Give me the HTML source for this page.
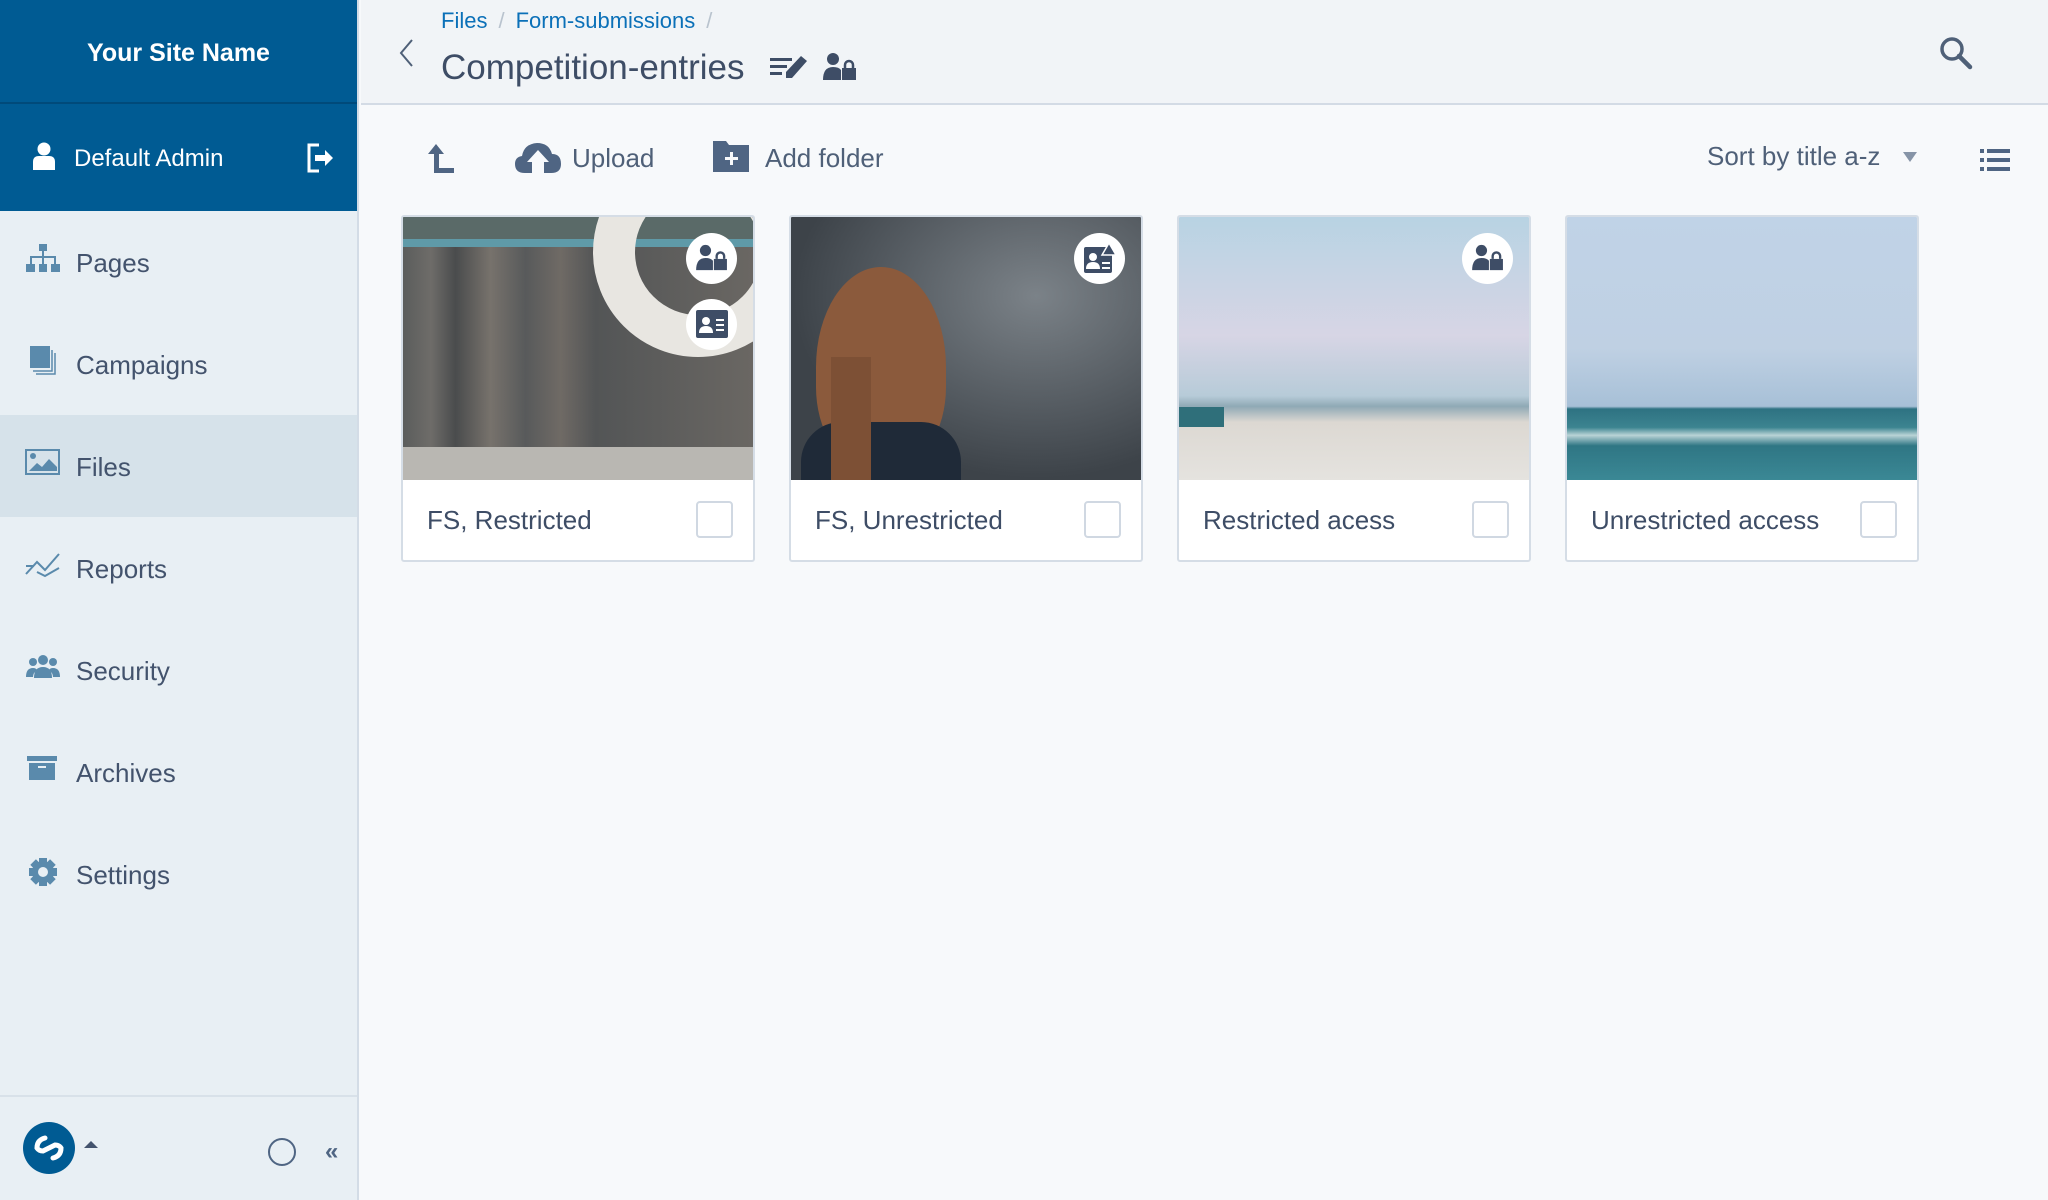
<!DOCTYPE html>
<html><head><meta charset="utf-8"><style>
*{box-sizing:border-box;margin:0;padding:0}
body{width:2048px;height:1200px;overflow:hidden;font-family:"Liberation Sans",sans-serif;background:#f7f9fb;position:relative;color:#43536d}
.side{position:absolute;left:0;top:0;width:359px;height:1200px;background:#e8eff4;border-right:2px solid #d3dce6}
.brand{height:104px;background:#005b93;color:#fff;font-weight:bold;font-size:25px;text-align:center;line-height:106px;border-bottom:2px solid #004a7a}
.admin{height:107px;background:#005b93;color:#fff;font-size:24px;position:relative}
.admin span{position:absolute;left:74px;top:41px}
.nav{position:absolute;left:0;width:357px;height:102px;font-size:26px}
.nav span{position:absolute;left:76px;top:37px}
.nav svg{position:absolute;left:25px;top:33px}
.top{position:absolute;left:361px;top:0;right:0;height:105px;background:#f1f4f7;border-bottom:2px solid #d3dbe5}
.bc{position:absolute;left:80px;top:8px;font-size:22px;color:#0b70b8}
.bc i{color:#b9c3ce;font-style:normal;margin:0 11px}
.title{position:absolute;left:80px;top:48px;font-size:35px;color:#3e4d66}
.card{position:absolute;top:215px;width:354px;height:347px;background:#fff;border:2px solid #d5dde6;border-radius:3px;overflow:hidden}
.img{height:263px;position:relative;overflow:hidden}
.lbl{position:absolute;left:24px;top:288px;font-size:26px;color:#3e4d66}
.cb{position:absolute;right:20px;top:284px;width:37px;height:37px;border:2px solid #d0d8e2;border-radius:4px}
.badge{position:absolute;width:51px;height:51px;border-radius:50%;background:#fff;right:16px}
.tool{position:absolute;top:143px;font-size:26px;color:#4f6078}
</style></head><body>
<div class="side">
<div class="brand">Your Site Name</div>
<div class="admin">
<svg style="position:absolute;left:32px;top:38px" width="24" height="28" viewBox="0 0 24 28"><circle cx="12" cy="7" r="6.5" fill="#fff"/><path d="M1 28V20q0-6 6-6h10q6 0 6 6v8z" fill="#fff"/></svg>
<span>Default Admin</span>
<svg style="position:absolute;left:305px;top:38px" width="30" height="32" viewBox="0 0 30 32"><path d="M14 3H4v26h10" fill="none" stroke="#fff" stroke-width="3"/><path d="M10 13h10V8l8 8-8 8v-5H10z" fill="#fff"/></svg>
</div>
<div class="nav" style="top:211px"><svg width="36" height="30" viewBox="0 0 36 30" fill="#5a8aac"><rect x="14" y="0" width="8" height="7"/><rect x="17" y="7" width="2" height="6"/><rect x="5" y="12" width="26" height="2"/><rect x="5" y="12" width="2" height="8"/><rect x="29" y="12" width="2" height="8"/><rect x="17" y="12" width="2" height="8"/><rect x="1" y="20" width="9" height="8"/><rect x="14" y="20" width="8" height="8"/><rect x="26" y="20" width="9" height="8"/></svg><span>Pages</span></div>
<div class="nav" style="top:313px"><svg width="36" height="30" viewBox="0 0 36 30"><rect x="5" y="0" width="20" height="22" fill="#5a8aac"/><path d="M27 4v21H8M30 7v21H11" fill="none" stroke="#5a8aac" stroke-width="1.5"/></svg><span>Campaigns</span></div>
<div class="nav" style="top:415px;background:#d6e2ea"><svg width="36" height="30" viewBox="0 0 36 30"><rect x="1" y="2" width="33" height="24" fill="none" stroke="#5a8aac" stroke-width="2"/><circle cx="8" cy="8" r="3" fill="#5a8aac"/><path d="M4 23l8-8 5 4 7-8 8 8v4z" fill="#5a8aac"/></svg><span>Files</span></div>
<div class="nav" style="top:517px"><svg width="36" height="30" viewBox="0 0 36 30"><path d="M1 24L12 12l8 8L34 4M1 16l8 0M12 22l8 4 14-8" fill="none" stroke="#5a8aac" stroke-width="2"/></svg><span>Reports</span></div>
<div class="nav" style="top:619px"><svg width="36" height="30" viewBox="0 0 36 30" fill="#5a8aac"><circle cx="18" cy="8" r="5"/><circle cx="8" cy="10" r="4"/><circle cx="28" cy="10" r="4"/><path d="M9 26q0-11 9-11t9 11z"/><path d="M1 25q0-9 7-9 3 0 4 2-4 3-4 7zM35 25q0-9-7-9-3 0-4 2 4 3 4 7z"/></svg><span>Security</span></div>
<div class="nav" style="top:721px"><svg width="36" height="30" viewBox="0 0 36 30" fill="#5a8aac"><rect x="2" y="2" width="30" height="5"/><rect x="4" y="9" width="26" height="17"/><rect x="13" y="12" width="8" height="2" fill="#e8eff4"/></svg><span>Archives</span></div>
<div class="nav" style="top:823px"><svg width="36" height="32" viewBox="0 0 36 32"><g fill="#5a8aac" transform="translate(18 16)"><rect x="-4" y="-14" width="8" height="28"/><rect x="-4" y="-14" width="8" height="28" transform="rotate(45)"/><rect x="-4" y="-14" width="8" height="28" transform="rotate(90)"/><rect x="-4" y="-14" width="8" height="28" transform="rotate(135)"/><circle r="11"/><circle r="5" fill="#e8eff4"/></g></svg><span>Settings</span></div>
<div style="position:absolute;left:0;top:1095px;width:357px;border-top:2px solid #d8e1e9"></div>
<svg style="position:absolute;left:23px;top:1122px" width="80" height="52" viewBox="0 0 80 52"><circle cx="26" cy="26" r="26" fill="#005b93"/><path d="M22 16q-8 2-8 10 2 3 6 3M30 36q8-2 8-10-2-3-6-3M20 29l12-6" stroke="#fff" stroke-width="5" fill="none" stroke-linecap="round"/><path d="M61 26l7-7 7 7z" fill="#43536d"/></svg>
<svg style="position:absolute;left:267px;top:1137px" width="30" height="30"><circle cx="15" cy="15" r="13" fill="none" stroke="#4f6583" stroke-width="2"/></svg>
<div style="position:absolute;left:325px;top:1138px;font-size:24px;font-weight:bold;color:#4f6583">«</div>
</div>
<div class="top">
<div class="bc">Files<i>/</i>Form-submissions<i>/</i></div>
<svg style="position:absolute;left:37px;top:38px" width="16" height="30"><path d="M14 2L3 15l11 13" fill="none" stroke="#4f6078" stroke-width="2"/></svg>
<div class="title">Competition-entries</div>
<svg style="position:absolute;left:408px;top:54px" width="40" height="28" viewBox="0 0 40 28" fill="#3e4d66"><rect x="1" y="4" width="22" height="3"/><rect x="1" y="11" width="17" height="3"/><rect x="1" y="18" width="12" height="3"/><path d="M32 2l6 5-15 17h-6v-6z"/></svg>
<svg style="position:absolute;left:462px;top:52px" width="34" height="30" viewBox="0 0 34 30" fill="#3e4d66"><circle cx="10" cy="7" r="6"/><path d="M0 28q0-13 10-13 6 0 8 3v10z"/><rect x="19" y="16" width="14" height="12"/><path d="M22 16v-3a4 4 0 0 1 8 0v3" fill="none" stroke="#3e4d66" stroke-width="2.5"/></svg>
<svg style="position:absolute;left:1578px;top:36px" width="34" height="34" viewBox="0 0 34 34"><circle cx="13" cy="13" r="10" fill="none" stroke="#4f6078" stroke-width="3.5"/><path d="M20 20l11 11" stroke="#4f6078" stroke-width="4.5" stroke-linecap="round"/></svg>
</div>
<svg style="position:absolute;left:428px;top:144px" width="28" height="30" viewBox="0 0 28 30" fill="#4f6583"><path d="M8 0l8 10h-5v14h15v5H6V10H0z"/></svg>
<svg style="position:absolute;left:515px;top:142px" width="46" height="32" viewBox="0 0 46 32" fill="#4f6583"><path d="M10 31q-10 0-10-9 0-7 7-8 2-12 15-13 12 0 15 11 9 0 9 10 0 9-10 9h-7V20h5l-11-12-11 12h5v11z"/></svg>
<div class="tool" style="left:572px">Upload</div>
<svg style="position:absolute;left:713px;top:141px" width="36" height="31" viewBox="0 0 36 31" fill="#4f6583"><path d="M0 0h13l3 4h20v27H0z"/><path d="M17 11h3v5h5v3h-5v5h-3v-5h-5v-3h5z" fill="#f7f9fb"/></svg>
<div class="tool" style="left:765px">Add folder</div>
<div class="tool" style="left:1707px;top:141px">Sort by title a-z</div>
<svg style="position:absolute;left:1903px;top:152px" width="14" height="10"><path d="M0 0h14L7 10z" fill="#8694a7"/></svg>
<svg style="position:absolute;left:1980px;top:148px" width="30" height="24" viewBox="0 0 30 24" fill="#4f6583"><rect x="0" y="1" width="4" height="4"/><rect x="7" y="1" width="23" height="4"/><rect x="0" y="10" width="4" height="4"/><rect x="7" y="10" width="23" height="4"/><rect x="0" y="19" width="4" height="4"/><rect x="7" y="19" width="23" height="4"/></svg>

<div class="card" style="left:401px"><div class="img" style="background:linear-gradient(90deg,#5b5d5c 0,#6e6c69 8%,#4a4c4d 15%,#77726c 25%,#585a5b 35%,#6f6a65 45%,#535556 55%,#6a6763 100%)">
<div style="position:absolute;left:0;top:0;width:100%;height:30px;background:#5a6a68"></div>
<div style="position:absolute;left:0;top:22px;width:100%;height:8px;background:#5f9aa8"></div>
<div style="position:absolute;left:0;top:230px;width:100%;height:33px;background:#b9b7b2"></div>
<div style="position:absolute;left:190px;top:-70px;width:210px;height:210px;border-radius:50%;border:42px solid #e8e6e1"></div>
<div class="badge" style="top:16px"><svg style="margin:11px 0 0 10px" width="32" height="28" viewBox="0 0 34 30" fill="#3e4d66"><circle cx="10" cy="7" r="6"/><path d="M0 28q0-13 10-13 6 0 8 3v10z"/><rect x="19" y="16" width="14" height="12"/><path d="M22 16v-3a4 4 0 0 1 8 0v3" fill="none" stroke="#3e4d66" stroke-width="2.5"/></svg></div>
<div class="badge" style="top:82px"><svg style="margin:11px 0 0 10px" width="32" height="28" viewBox="0 0 32 28"><rect x="0" y="0" width="32" height="28" rx="2" fill="#3e4d66"/><circle cx="10" cy="11" r="4" fill="#fff"/><path d="M3 23q0-7 7-7t7 7z" fill="#fff"/><path d="M20 10h8M20 15h8M20 20h8" stroke="#fff" stroke-width="2"/></svg></div>
</div><div class="lbl">FS, Restricted</div><div class="cb"></div></div>

<div class="card" style="left:789px"><div class="img" style="background:radial-gradient(ellipse at 70% 30%,#7b8288,#3d4349 70%)">
<div style="position:absolute;left:25px;top:50px;width:130px;height:200px;border-radius:50% 50% 40% 40%;background:#8b5a3c"></div>
<div style="position:absolute;left:10px;top:205px;width:160px;height:60px;border-radius:40px 40px 0 0;background:#1f2a38"></div>
<div style="position:absolute;left:40px;top:140px;width:40px;height:125px;background:#7d5035"></div>
<div class="badge" style="top:16px"><svg style="margin:10px 0 0 10px" width="32" height="30" viewBox="0 0 32 30"><rect x="0" y="4" width="28" height="26" rx="2" fill="#3e4d66"/><circle cx="9" cy="14" r="4" fill="#fff"/><path d="M2 26q0-7 7-7t7 7z" fill="#fff"/><path d="M18 20h8M18 25h8" stroke="#fff" stroke-width="2"/><path d="M25 0l7 12H18z" fill="#3e4d66" stroke="#fff" stroke-width="1.5"/></svg></div>
</div><div class="lbl">FS, Unrestricted</div><div class="cb"></div></div>

<div class="card" style="left:1177px"><div class="img" style="background:linear-gradient(180deg,#b8d3e3 0,#d7d5e5 45%,#b7cbd8 68%,#8fa9b5 72%,#dcd8d2 78%,#e5e3df 100%)">
<div style="position:absolute;left:0;top:190px;width:45px;height:20px;background:#2f6f7a"></div>
<div class="badge" style="top:16px"><svg style="margin:11px 0 0 10px" width="32" height="28" viewBox="0 0 34 30" fill="#3e4d66"><circle cx="10" cy="7" r="6"/><path d="M0 28q0-13 10-13 6 0 8 3v10z"/><rect x="19" y="16" width="14" height="12"/><path d="M22 16v-3a4 4 0 0 1 8 0v3" fill="none" stroke="#3e4d66" stroke-width="2.5"/></svg></div>
</div><div class="lbl">Restricted acess</div><div class="cb"></div></div>

<div class="card" style="left:1565px"><div class="img" style="background:linear-gradient(180deg,#c0d3e7 0,#bfd0e3 50%,#a7c0d7 72%,#2e7282 73%,#3c8490 80%,#b9d3d6 83%,#2f7684 87%,#3b8895 100%)"></div><div class="lbl">Unrestricted access</div><div class="cb"></div></div>
</body></html>
